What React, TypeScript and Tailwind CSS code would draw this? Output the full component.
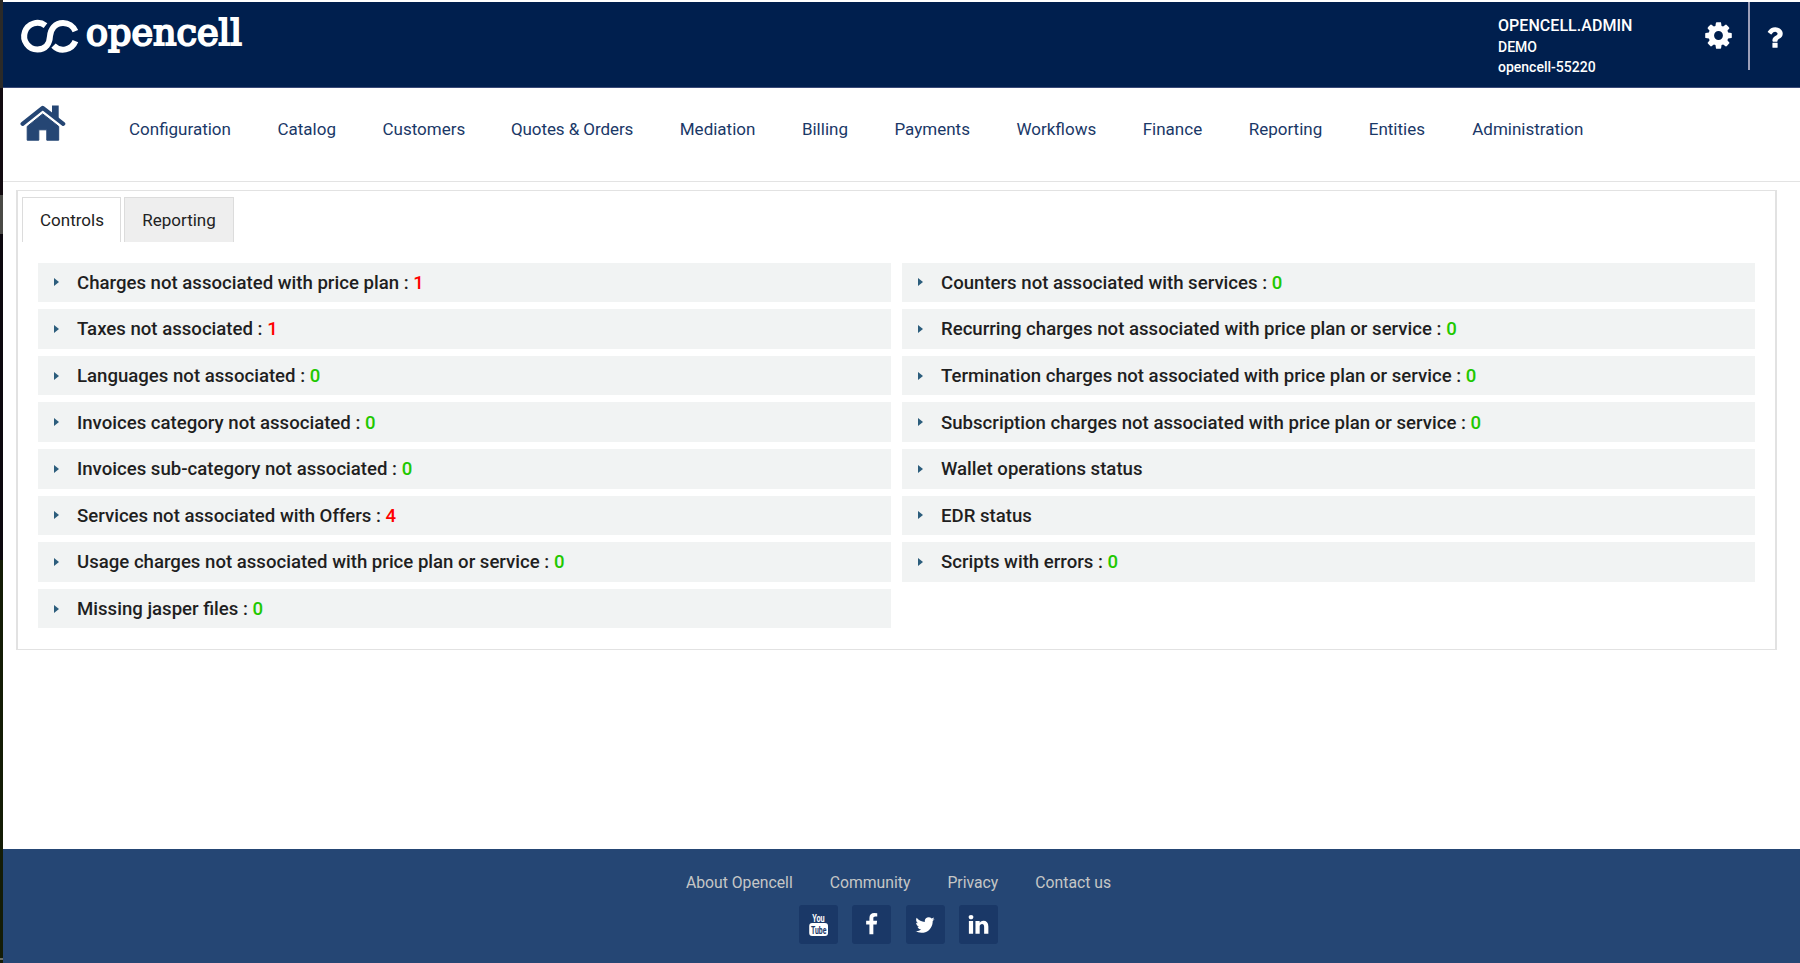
import React from "react";

const navItems = [
  "Configuration", "Catalog", "Customers", "Quotes & Orders", "Mediation", "Billing",
  "Payments", "Workflows", "Finance", "Reporting", "Entities", "Administration",
];

type Check = { label: string; count?: number };

const leftChecks: Check[] = [
  { label: "Charges not associated with price plan", count: 1 },
  { label: "Taxes not associated", count: 1 },
  { label: "Languages not associated", count: 0 },
  { label: "Invoices category not associated", count: 0 },
  { label: "Invoices sub-category not associated", count: 0 },
  { label: "Services not associated with Offers", count: 4 },
  { label: "Usage charges not associated with price plan or service", count: 0 },
  { label: "Missing jasper files", count: 0 },
];

const rightChecks: Check[] = [
  { label: "Counters not associated with services", count: 0 },
  { label: "Recurring charges not associated with price plan or service", count: 0 },
  { label: "Termination charges not associated with price plan or service", count: 0 },
  { label: "Subscription charges not associated with price plan or service", count: 0 },
  { label: "Wallet operations status" },
  { label: "EDR status" },
  { label: "Scripts with errors", count: 0 },
];

const COG =
  "M1152 896q0-106-75-181t-181-75-181 75-75 181 75 181 181 75 181-75 75-181zm512-109v222q0 12-8 23t-20 13l-185 28q-19 54-39 91 35 50 107 138 10 12 10 25t-9 23q-27 37-99 108t-94 71q-12 0-26-9l-138-108q-44 23-91 38-16 136-29 186-7 28-36 28h-222q-14 0-24.5-8.5t-11.5-21.5l-28-184q-49-16-90-37l-141 107q-10 9-25 9-14 0-25-11-126-114-165-168-7-10-7-23 0-12 8-23 15-21 51-66.5t54-70.5q-27-50-41-99l-183-27q-13-2-21-12.5t-8-23.5v-222q0-12 8-23t19-13l186-28q14-46 39-92-40-57-107-138-10-12-10-24 0-10 9-23 26-36 98.5-107.5t94.5-71.5q13 0 26 10l138 107q44-23 91-38 16-136 29-186 7-28 36-28h222q14 0 24.5 8.5t11.5 21.5l28 184q49 16 90 37l142-107q9-9 24-9 13 0 25 10 129 119 165 170 7 8 7 22 0 12-8 23-15 21-51 66.5t-54 70.5q26 50 41 98l183 28q13 2 21 12.5t8 23.5z";
const QUESTION =
  "M1088 1256v240q0 16-12 28t-28 12h-240q-16 0-28-12t-12-28v-240q0-16 12-28t28-12h240q16 0 28 12t12 28zm316-600q0 54-15.5 101t-35 76.5-55 59.5-57.5 43.5-61 35.5q-41 23-68.5 65t-27.5 67q0 17-12 32.5t-28 15.5h-240q-15 0-25.5-18.5t-10.5-37.5v-45q0-83 65-156.5t143-108.5q59-27 84-56t25-76q0-42-46.5-74t-107.5-32q-65 0-108 29-35 25-107 115-13 16-31 16-12 0-25-8l-164-125q-13-10-15.5-25t5.5-28q160-266 464-266 80 0 161 31t146 83 106 127.5 41 158.5z";
const FACEBOOK =
  "M1343 12v264h-157q-86 0-116 36t-30 108v189h293l-39 296h-254v759h-306v-759h-255v-296h255v-218q0-186 104-288.5t277-102.5q147 0 228 12z";
const TWITTER =
  "M1684 408q-67 98-162 167 1 14 1 42 0 130-38 259.5t-115.5 248.5-184.5 210.5-258 146-323 54.5q-271 0-496-145 35 4 78 4 225 0 401-138-105-2-188-64.5t-114-159.5q33 5 61 5 43 0 85-11-112-23-185.5-111.5t-73.5-205.5v-4q68 38 146 41-66-44-105-115t-39-154q0-88 44-163 121 149 294.5 238.5t371.5 99.5q-8-38-8-74 0-134 94.5-228.5t228.5-94.5q140 0 236 102 109-21 205-78-37 115-142 178 93-10 186-50z";
const LINKEDIN =
  "M477 625v991h-330v-991h330zm21-306q1 73-50.5 122t-135.5 49h-2q-82 0-132-49t-50-122q0-74 51.5-122.5t134.5-48.5 133 48.5 51 122.5zm1166 729v568h-329v-530q0-105-40.5-164.5t-126.5-59.5q-63 0-105.5 34.5t-63.5 85.5q-11 30-11 81v553h-329q2-399 2-647t-1-296l-1-48h329v144h-2q20-32 41-56t56.5-52 87-43.5 114.5-15.5q171 0 275 113.5t104 332.5z";

function Icon({ d, className }: { d: string; className: string }) {
  return (
    <svg viewBox="0 0 1792 1792" fill="currentColor" className={className}>
      <path d={d} />
    </svg>
  );
}

function Logo() {
  return (
    <svg width="240" height="54" viewBox="18 8 240 54" className="block text-white">
      <g fill="none" stroke="currentColor" strokeWidth="6">
        <path d="M45.5 25.6A13.3 13.3 0 1 0 37.5 49.5C46 49.5 49.6 43.5 50 36.2C50.5 29 55 23 63 23A13.3 13.3 0 0 1 75.4 31.2" />
        <path d="M53.5 45.6A13.3 13.3 0 0 0 75.4 41.2" />
      </g>
      <text
        x="86"
        y="45.4"
        fill="currentColor"
        stroke="currentColor"
        strokeWidth="2"
        fontFamily="'DejaVu Serif', serif"
        fontSize="35.5"
        textLength="156"
        lengthAdjust="spacingAndGlyphs"
      >
        opencell
      </text>
    </svg>
  );
}

function CheckRow({ label, count }: Check) {
  return (
    <div className="flex h-[39.6px] items-center bg-[#f1f3f3] pl-4">
      <svg width="5" height="8" viewBox="0 0 5 8" className="mr-[18px] shrink-0"><path d="M0 0L5 4L0 8z" fill="#2c5d7c" /></svg>
      <span className="pt-[0.5px] text-[18.6px] leading-6 font-medium whitespace-pre text-[#1f1f1f]">
        {label}
        {count !== undefined && (
          <>
            {" : "}
            <span className={count > 0 ? "text-[#ff0000]" : "text-[#1fc800]"}>{count}</span>
          </>
        )}
      </span>
    </div>
  );
}

function SocialButton({ children }: { children: React.ReactNode }) {
  return <a className="flex size-[39px] items-center justify-center rounded-[3px] bg-[#1a3867] text-white">{children}</a>;
}

export default function App() {
  return (
    <div className="flex h-[963px] w-[1800px] overflow-hidden bg-white font-['Roboto',sans-serif]">
      <div className="flex w-[3px] shrink-0 flex-col">
        <div className="h-[88px] bg-[#2b2a28]" />
        <div className="h-[107px] bg-[#120a10]" />
        <div className="h-[39px] bg-[#4a4a46]" />
        <div className="h-[326px] bg-[#0c080f]" />
        <div className="h-[398px] bg-[#141c06]" />
        <div className="h-[2px] bg-[#6b6e66]" />
        <div className="flex-1 bg-[#141c06]" />
      </div>
      <div className="flex min-w-0 flex-1 flex-col pt-[2px]">
        <header className="flex h-[86px] shrink-0 items-start border-b border-[#3a4a78] bg-[#001f4e] text-white">
          <div className="pt-[6px] pl-[15px]"><Logo /></div>
          <div className="ml-auto flex w-[205px] flex-col pt-[13px] font-medium">
            <span className="text-[16px] leading-[22px] tracking-[0.05px]">OPENCELL.ADMIN</span>
            <span className="text-[14px] leading-5">DEMO</span>
            <span className="text-[14px] leading-5">opencell-55220</span>
          </div>
          <Icon d={COG} className="mt-[18px] size-[31px]" />
          <div className="ml-[14px] h-[68px] w-[2px] bg-[#9c9fb8]" />
          <Icon d={QUESTION} className="mt-[21px] mr-[11px] ml-[10px] size-[29px]" />
        </header>

        <nav className="flex h-[94px] shrink-0 border-b border-[#e3e3e3] pl-[17px]">
          <svg width="46" height="38" viewBox="0 0 46 38" className="mt-[16px] shrink-0 text-[#254674]" fill="currentColor">
            <path d="M32 1.6H38.7V15L32 9.5z" />
            <path d="M2.6 19.8L22.7 3.8L43.2 19.8" fill="none" stroke="currentColor" strokeWidth="4.2" strokeLinecap="round" strokeLinejoin="round" />
            <path d="M7.2 22.4L22.7 9.9L38.7 22.4V36.2H26.8V25.8H18.8V36.2H7.2z" stroke="currentColor" strokeWidth="1" strokeLinejoin="round" />
          </svg>
          <ul className="mt-[29px] ml-[63px] flex gap-[46.5px] text-[17px] leading-6 whitespace-nowrap text-[#1a3867]">
            {navItems.map((item) => (
              <li key={item} className={item === "Quotes & Orders" ? "-ml-[0.8px] tracking-[-0.08px]" : item === "Administration" ? "ml-[0.8px]" : ""}>{item}</li>
            ))}
          </ul>
        </nav>

        <main className="mt-[8px] mr-[23px] ml-[13px] h-[460px] shrink-0 border-x-2 border-y border-[#e2e2e2] px-1 pt-[6px]">
          <div className="flex gap-[3px] text-[17px] text-[#222]">
            <div className="flex h-[45px] w-[99px] items-center justify-center border border-b-0 border-[#dcdcdc] bg-white pt-[2px] pl-[1px]">Controls</div>
            <div className="flex h-[45px] w-[110px] items-center justify-center border border-b-0 border-[#dcdcdc] bg-[#eeeeee] pt-[2px]">Reporting</div>
          </div>
          <div className="mt-[20.7px] grid grid-cols-2 gap-x-[11px] px-[16px]">
            <div className="flex flex-col gap-[7px]">{leftChecks.map((c) => <CheckRow key={c.label} {...c} />)}</div>
            <div className="flex flex-col gap-[7px]">{rightChecks.map((c) => <CheckRow key={c.label} {...c} />)}</div>
          </div>
        </main>

        <footer className="mt-auto flex h-[114px] shrink-0 flex-col items-center bg-[#254674]">
          <div className="mt-[22px] flex gap-[37px] pr-[6px] text-[15.75px] leading-6 text-[#c6c6c6]">
            <a>About Opencell</a><a>Community</a><a>Privacy</a><a>Contact us</a>
          </div>
          <div className="mt-[10px] flex gap-[14.5px] pr-[6px]">
            <SocialButton>
              <svg width="39" height="39" viewBox="0 0 39 39" fontFamily="Roboto, sans-serif" fontWeight="700">
                <text x="13.2" y="16.8" fontSize="11.5" fill="#fff" textLength="12.5" lengthAdjust="spacingAndGlyphs">You</text>
                <rect x="10.2" y="18" width="18.8" height="13" rx="3" fill="#fff" />
                <text x="12" y="28.6" fontSize="11.5" fill="#1a3867" textLength="15.4" lengthAdjust="spacingAndGlyphs">Tube</text>
              </svg>
            </SocialButton>
            <SocialButton><Icon d={FACEBOOK} className="size-[23px]" /></SocialButton>
            <SocialButton><Icon d={TWITTER} className="size-[22px]" /></SocialButton>
            <SocialButton><Icon d={LINKEDIN} className="size-[23px]" /></SocialButton>
          </div>
        </footer>
      </div>
    </div>
  );
}
